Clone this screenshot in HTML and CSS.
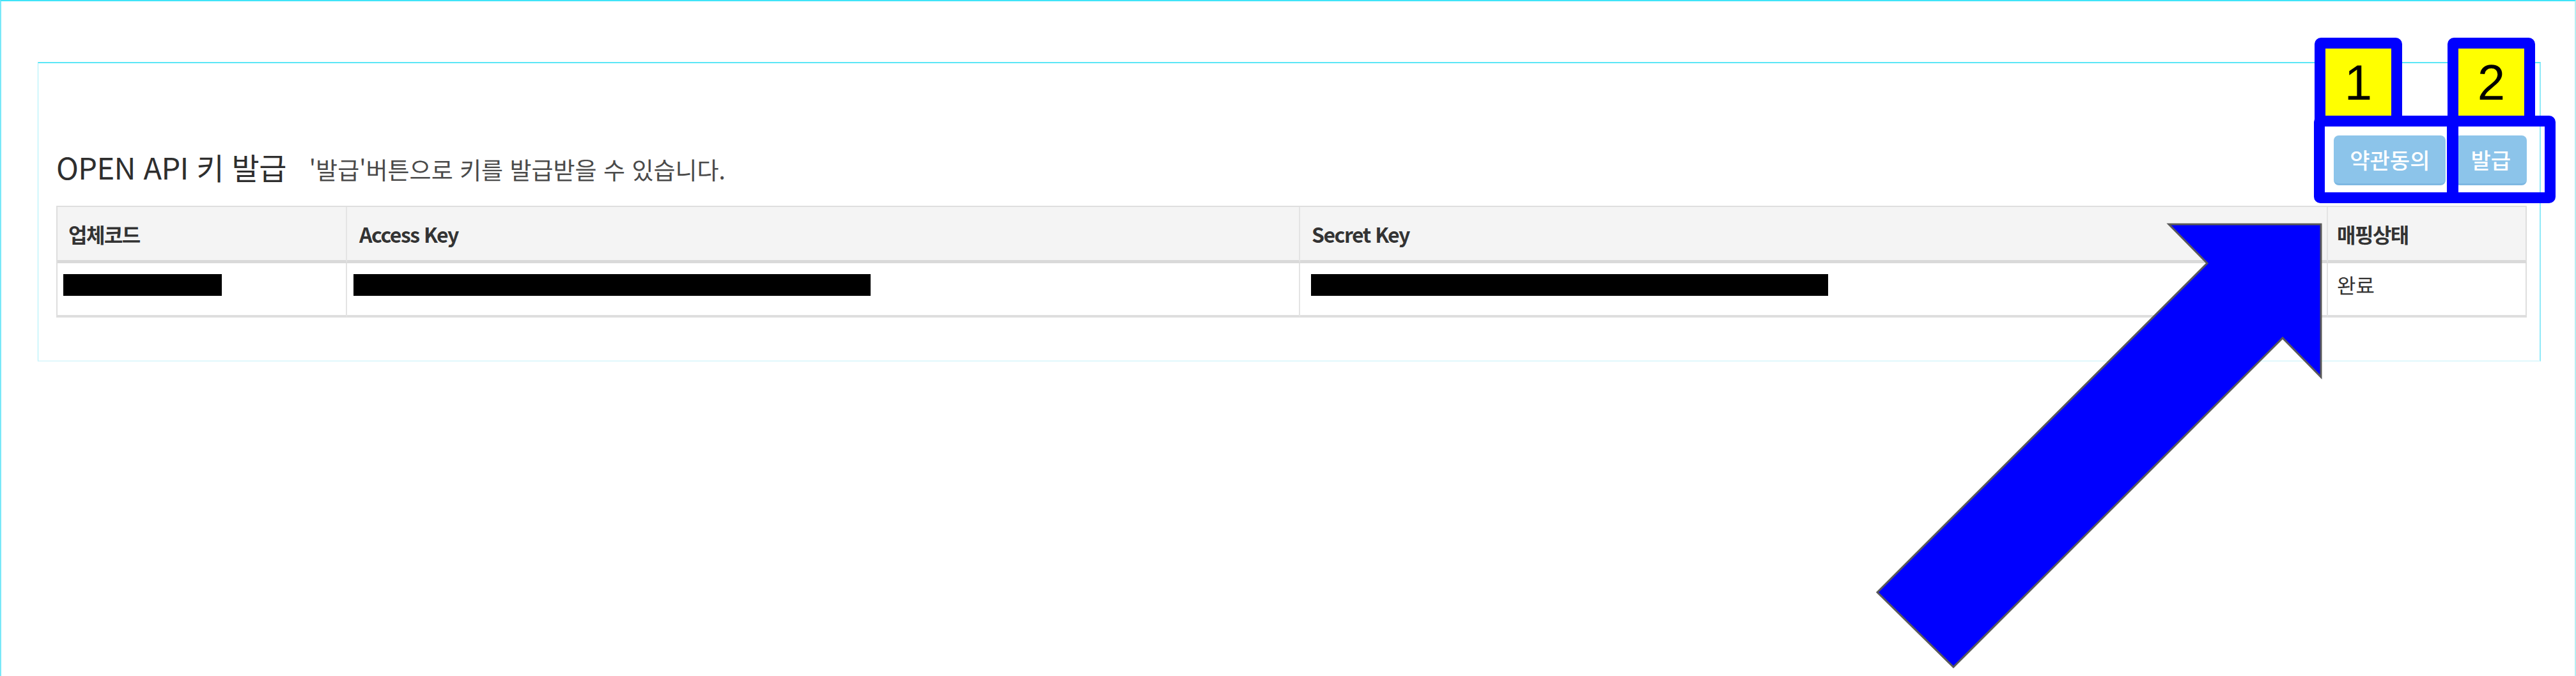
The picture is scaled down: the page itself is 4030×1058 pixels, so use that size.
FILE: index.html
```html
<!DOCTYPE html>
<html lang="ko">
<head>
<meta charset="utf-8">
<title>OPEN API 키 발급</title>
<link rel="stylesheet" href="styles.css">
</head>
<body>
<div class="frame">
  <section class="panel">
    <div class="head">
      <div class="heading">
        <h2 class="title">OPEN API 키 발급</h2>
        <span class="desc">'발급'버튼으로 키를 발급받을 수 있습니다.</span>
      </div>
      <div class="actions">
        <button class="btn">약관동의</button>
        <button class="btn">발급</button>
      </div>
    </div>
    <div class="grid">
      <div class="cell th c1">업체코드</div>
      <div class="cell th c2">Access Key</div>
      <div class="cell th c3">Secret Key</div>
      <div class="cell th c4">매핑상태</div>
      <div class="cell td c1"><span class="bar bar-code"></span></div>
      <div class="cell td c2"><span class="bar bar-access"></span></div>
      <div class="cell td c3"><span class="bar bar-secret"></span></div>
      <div class="cell td c4">완료</div>
    </div>
  </section>
</div>

<div class="mark mark-a"></div>
<div class="mark mark-b"></div>
<div class="label label-1">1</div>
<div class="label label-2">2</div>
<svg class="arrow" width="720" height="715" viewBox="0 0 720 715" xmlns="http://www.w3.org/2000/svg">
  <polygon points="711,11 473,11 533,72 17,587 136,704 651,189 711,250" fill="#0000ff" stroke="#595959" stroke-width="3" stroke-linejoin="miter"/>
</svg>
</body>
</html>
```

FILE: styles.css
```css
* { box-sizing: border-box; }

html, body {
  margin: 0;
  padding: 0;
  background: #ffffff;
}

body {
  width: 4030px;
  height: 1058px;
  overflow: hidden;
  position: relative;
  font-family: "Noto Sans CJK KR", "Noto Sans", sans-serif;
  color: #333333;
}

.frame {
  height: 1058px;
  border-top: 2px solid #40e4f8;
  border-left: 2px solid #7ae8f8;
  border-right: 2px solid #b4eef2;
  padding-top: 95px;
}

.panel {
  margin: 0 53px 0 57px;
  border-top: 2px solid #5ae6f6;
  border-left: 1px solid #a8f0fa;
  border-right: 2px solid #90eaf8;
  border-bottom: 2px solid #e0f8fc;
  padding: 113px 20px 67px 28px;
}

.head {
  display: flex;
  justify-content: space-between;
  align-items: flex-end;
  height: 78px;
  margin-bottom: 32px;
}

.heading {
  display: flex;
  align-items: baseline;
  gap: 36px;
  margin-bottom: 6px;
}

.title {
  margin: 0;
  font-size: 47px;
  font-weight: 400;
  line-height: 1;
  color: #2e2e2e;
  letter-spacing: -0.6px;
}

.desc {
  font-size: 37px;
  line-height: 1;
  color: #4a4a4a;
  letter-spacing: 0;
}

.actions {
  display: flex;
  gap: 14px;
}

.btn {
  height: 78px;
  padding: 0 25px;
  border: 0;
  border-bottom: 3px solid #7db8e2;
  border-radius: 8px;
  background: #8cc4ea;
  color: #ffffff;
  font-family: "Noto Sans CJK KR", "Noto Sans", sans-serif;
  font-size: 34px;
  font-weight: 500;
  line-height: 1;
}

.grid {
  display: grid;
  grid-template-columns: 453px 1491px 1608px 311px;
  border-top: 2px solid #dedede;
  border-left: 2px solid #dedede;
}

.cell {
  border-right: 2px solid #e4e4e4;
  padding-left: 17px;
  font-size: 32px;
  line-height: 1;
}

.c4 { border-right-color: #dedede; padding-left: 14px; }
.c2 { padding-left: 19px; }
.c3 { padding-left: 18px; }

.th {
  height: 88px;
  display: flex;
  align-items: center;
  background: #f4f4f4;
  border-bottom: 5px solid #d9d9d9;
  font-weight: 700;
  letter-spacing: -1.5px;
  color: #333333;
}

.td {
  height: 85px;
  border-bottom: 4px solid #dedede;
  padding-top: 17px;
  color: #333333;
}

.bar {
  display: block;
  height: 34px;
  background: #000000;
}

.bar-code { width: 248px; margin-left: -8px; }
.bar-access { width: 809px; margin-left: -9px; }
.bar-secret { width: 809px; margin-left: -1px; }

/* annotation overlay */
.mark {
  position: absolute;
  top: 181px;
  height: 137px;
  border: 17px solid #0000ff;
  border-radius: 10px;
}

.mark-a { left: 3620px; width: 226px; }
.mark-b { left: 3828px; width: 170px; }

.label {
  position: absolute;
  top: 59px;
  width: 137px;
  height: 139px;
  border: 17px solid #0000ff;
  border-radius: 10px 10px 0 0;
  background: #ffff00;
  display: flex;
  align-items: center;
  justify-content: center;
  font-family: "Liberation Sans", Arial, sans-serif;
  font-size: 78px;
  line-height: 1;
  color: #000000;
}

.label-1 { left: 3621px; }
.label-2 { left: 3829px; }

.arrow {
  position: absolute;
  left: 2920px;
  top: 340px;
}
```
